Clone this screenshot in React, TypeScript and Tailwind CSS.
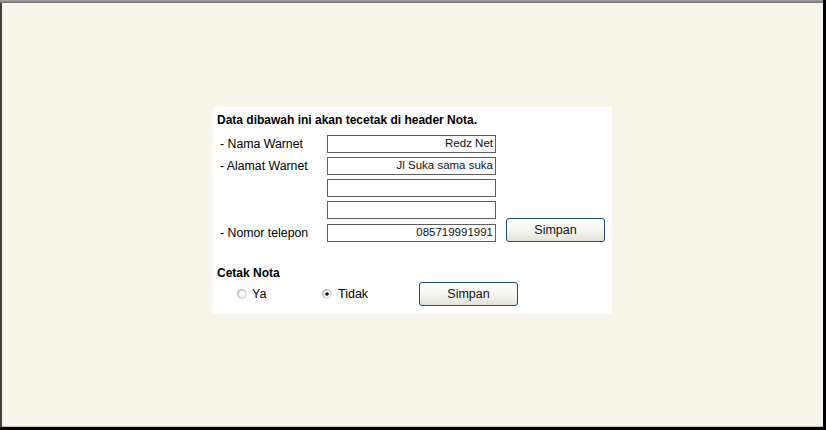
import React from "react";

function Radio({ checked }: { checked?: boolean }) {
  return (
    <svg width="10" height="10" viewBox="0 0 10 10" className="shrink-0">
      <defs>
        <linearGradient id={checked ? "rg1" : "rg0"} x1="0" y1="0" x2="1" y2="1">
          <stop offset="0" stopColor="#8c8c8c" />
          <stop offset="1" stopColor="#e0e0e0" />
        </linearGradient>
      </defs>
      <circle cx="5" cy="5" r="4.3" fill="#f4f4f4" stroke={checked ? "url(#rg1)" : "url(#rg0)"} strokeWidth="1.1" />
      {checked && <circle cx="5" cy="5" r="1.8" fill="#111" />}
    </svg>
  );
}

function Field({ value }: { value?: string }) {
  return (
    <div className="w-[169px] h-[18px] border border-[#5f5f5f] bg-white flex items-center justify-end pr-[2px] text-[11.5px] text-[#111] leading-none">
      {value}
    </div>
  );
}

function Btn({ children }: { children: React.ReactNode }) {
  return (
    <div className="w-[99px] h-[24px] rounded-[3px] border border-[#1f4d7a] bg-gradient-to-b from-white via-[#f6f6f2] to-[#e3e1d6] flex items-center justify-center text-[12.5px] text-[#111] leading-none">
      {children}
    </div>
  );
}

export default function App() {
  const rows: { label: string; value?: string }[] = [
    { label: "- Nama Warnet", value: "Redz Net" },
    { label: "- Alamat Warnet", value: "Jl Suka sama suka" },
    { label: "" },
    { label: "" },
  ];
  return (
    <div
      className="w-[826px] h-[430px] bg-black"
      style={{ fontFamily: '"Liberation Sans", Arial, sans-serif' }}
    >
      <div className="w-[823px] h-[427px] flex flex-col">
        <div className="h-[3px] bg-gradient-to-b from-[#a8a8a8] to-[#6e6e6e]" />
        <div className="flex-1 flex">
          <div className="w-[2px] bg-[#3f3f3f]" />
          <div className="flex-1 bg-[#f8f6ea] flex flex-col items-center pt-[104px] border-b border-[#c9c7bd]">
            <div className="w-[399px] h-[207px] bg-white pl-[4px] pt-[5px] text-[12px] text-black">
              <div className="h-[16px] leading-[16px] font-bold text-[12px]">
                Data dibawah ini akan tecetak di header Nota.
              </div>
              <div className="mt-[7px] flex flex-col gap-[4px]">
                {rows.map((r, i) => (
                  <div key={i} className="flex items-center">
                    <div className="w-[110px] pl-[3px] leading-none text-[12.3px]">{r.label}</div>
                    <Field value={r.value} />
                  </div>
                ))}
                <div className="flex items-end h-[18px] mt-[1px]">
                  <div className="w-[110px] pl-[3px] leading-none text-[12.3px] self-center">- Nomor telepon</div>
                  <Field value="085719991991" />
                  <div className="ml-[10px]">
                    <Btn>Simpan</Btn>
                  </div>
                </div>
              </div>
              <div className="mt-[24px] h-[15px] leading-[15px] font-bold text-[12px]">Cetak Nota</div>
              <div className="flex items-center h-[24px] mt-[1px]">
                <div className="ml-[20px] flex items-center gap-[5px] w-[85px]">
                  <Radio />
                  <span className="text-[12.5px] leading-none">Ya</span>
                </div>
                <div className="flex items-center gap-[6px] w-[97px]">
                  <Radio checked />
                  <span className="text-[12.5px] leading-none">Tidak</span>
                </div>
                <Btn>Simpan</Btn>
              </div>
            </div>
          </div>
        </div>
      </div>
    </div>
  );
}
